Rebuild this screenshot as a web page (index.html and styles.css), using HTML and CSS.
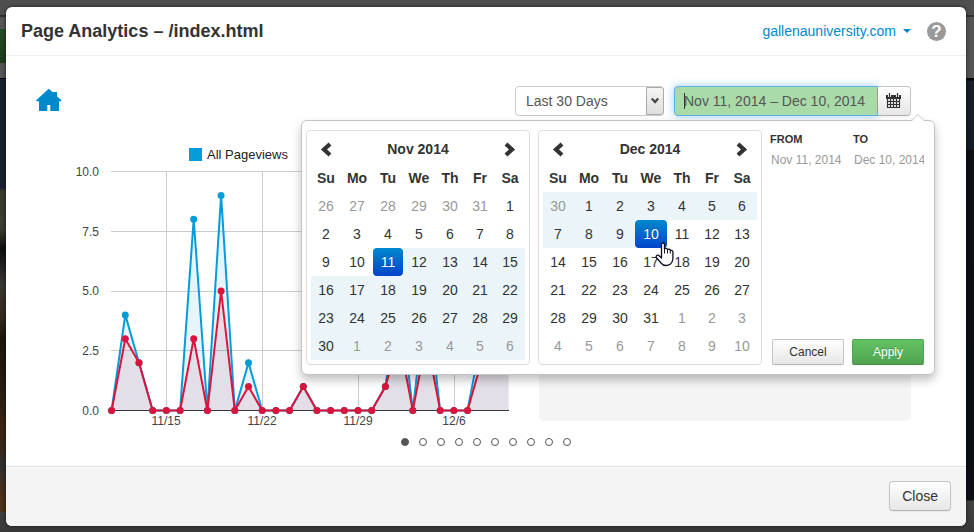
FILE: index.html
```html
<!DOCTYPE html>
<html lang="en">
<head>
<meta charset="utf-8">
<title>Page Analytics</title>
<link rel="stylesheet" href="styles.css">
</head>
<body>
<div class="modal" role="dialog" aria-labelledby="modal-title">
  <header class="modal-header">
    <h1 id="modal-title">Page Analytics – /index.html</h1>
    <div class="header-tools">
      <a class="site-link" href="#">gallenauniversity.com<span class="caret"></span></a>
      <button class="help" type="button" aria-label="Help">?</button>
    </div>
  </header>

  <main class="modal-body">
    <div class="toolbar">
      <a class="home" href="#" aria-label="Home">
        <svg width="26" height="24" viewBox="0 0 26 24"><path d="M12.700 .7 16.700 4.300V4H21V8.200L25.400 12.300V13.200H23V23H14.300V17H11.300V23H3V13.200H.2V12.300Z" fill="#0088cc"/></svg>
      </a>
      <div class="controls">
        <div class="select-wrap">
          <select class="range" aria-label="Date range"><option>Last 30 Days</option><option>Last 7 Days</option></select>
          <span class="select-arrow"><svg width="8" height="8" viewBox="0 0 8 8"><path d="M.8 1.500 4 5 7.200 1.500" fill="none" stroke="#444" stroke-width="2.200"/></svg></span>
        </div>
        <div class="date-group">
          <input class="dates" type="text" aria-label="Dates" value="Nov 11, 2014 – Dec 10, 2014">
          <span class="text-caret"></span>
          <button class="btn cal-btn" type="button" aria-label="Open calendar">
            <svg width="15" height="16" viewBox="0 0 15 16"><path d="M0 2h15v4H0Z" fill="#333"/><path d="M3.500 0v4M11.500 0v4" stroke="#f5f5f5" stroke-width="3"/><path d="M3.500 0v4M11.500 0v4M1.500 6v9M4.500 6v9M7.500 6v9M10.500 6v9M13.500 6v9M1 8.500h13M1 11.500h13M1 14.500h13" stroke="#333" stroke-width="1.200"/></svg>
          </button>

          <div class="popover">
            <div class="calendar" data-title="Nov 2014" data-lead="26-31" data-days="30" data-tail="6" data-from="16" data-to="41" data-selected="16"></div>
            <div class="calendar" data-title="Dec 2014" data-lead="30-30" data-days="31" data-tail="10" data-from="0" data-to="10" data-selected="10" data-pointer="yes"></div>
            <div class="range-side">
              <div class="range-fields">
                <div class="field"><label for="from">FROM</label><input id="from" type="text" value="Nov 11, 2014"></div>
                <div class="field"><label for="to">TO</label><input id="to" type="text" value="Dec 10, 2014"></div>
              </div>
              <div class="range-buttons">
                <button class="btn small" type="button">Cancel</button>
                <button class="btn small success" type="button">Apply</button>
              </div>
            </div>
          </div>
        </div>
      </div>
    </div>

    <div class="report">
      <svg class="chart" viewBox="36 124 503 306" role="img" aria-label="Pageviews by day">
        <rect x="189" y="148" width="13" height="13" fill="#049cdb"/>
        <text class="legend" x="207" y="159">All Pageviews</text>
        <path class="grid" d="M111 171.500H509M111 231.500H509M111 291.500H509M111 350.500H509M166.500 171V410M262.500 171V410M358.500 171V410M454.500 171V410"/>
        <path d="M111 410.500H509" stroke="#333"/>
        <g id="series"></g>
        <g class="axis-y"><text x="99" y="176">10.0</text><text x="99" y="236">7.5</text><text x="99" y="295">5.0</text><text x="99" y="355">2.5</text><text x="99" y="415">0.0</text></g>
        <g class="axis-x"><text x="166" y="425">11/15</text><text x="262" y="425">11/22</text><text x="358" y="425">11/29</text><text x="454" y="425">12/6</text></g>
      </svg>
      <section class="panel" aria-label="Summary"></section>
    </div>

    <nav class="pager" aria-label="Slides">
      <button class="dot active" type="button" aria-label="1"></button>
      <button class="dot" type="button" aria-label="2"></button>
      <button class="dot" type="button" aria-label="3"></button>
      <button class="dot" type="button" aria-label="4"></button>
      <button class="dot" type="button" aria-label="5"></button>
      <button class="dot" type="button" aria-label="6"></button>
      <button class="dot" type="button" aria-label="7"></button>
      <button class="dot" type="button" aria-label="8"></button>
      <button class="dot" type="button" aria-label="9"></button>
      <button class="dot" type="button" aria-label="10"></button>
    </nav>
  </main>

  <footer class="modal-footer"><button class="btn" type="button">Close</button></footer>
</div>
<script src="script.js"></script>
</body>
</html>
```
FILE: styles.css
```css
* { box-sizing: border-box; }

body {
  margin: 0;
  min-height: 100vh;
  padding: 7px 8px 6px 6px;
  display: flex;
  font: 14px/20px "Liberation Sans", Arial, sans-serif;
  color: #333;
  background:
    linear-gradient(#234d23, #1b3d1b) 0 29px / 6px 34px no-repeat,
    linear-gradient(#1a2130 0 109px, #3a3a2e 112px, #3d3c31 150px, #0c0e10 170px, #393733 205px, #322a1c 240px, #1e160a 260px, #2c2012 320px, #3d2412 350px, #38281a 370px, #303030 385px, #4b3019 415px, #4d3117) 0 79px / 6px 433px no-repeat,
    linear-gradient(#4f4f4f 0 15px, #303030 15px 17px, #555 17px 78px, #050505 78px 80px, #17202a 81px, #141c26 149px, #0d1014 151px, #0b1017 500px, #434343 501px, #393939 532px);
}

button, input, select { font: inherit; color: inherit; margin: 0; }
a { color: #08c; text-decoration: none; }

.modal {
  flex: 1;
  display: flex;
  flex-direction: column;
  background: #fff;
  border-radius: 6px;
  box-shadow: 0 0 4px rgba(0, 0, 0, .6);
}

.modal-header {
  display: flex;
  justify-content: space-between;
  align-items: center;
  height: 49px;
  padding: 0 20px 0 15px;
  border-bottom: 1px solid #eee;
}
.modal-header h1 { margin: 0; font-size: 18px; }
.header-tools { display: flex; align-items: center; gap: 16px; }
.site-link { display: flex; align-items: center; gap: 7px; }
.caret { border: 4px solid transparent; border-top-color: #08c; border-bottom: 0; }
.help {
  width: 19px;
  height: 19px;
  padding: 0;
  border: 0;
  border-radius: 50%;
  background: #999;
  color: #fff;
  font-size: 17px;
  font-weight: bold;
  line-height: 19px;
}

.modal-body { flex: 1; padding: 30px 55px 20px 30px; }
.toolbar { display: flex; justify-content: space-between; }
.home svg { display: block; margin-top: 2px; }
.controls { display: flex; gap: 10px; }

.select-wrap { position: relative; width: 149px; }
.range {
  appearance: none;
  width: 100%;
  height: 30px;
  padding: 0 10px;
  border: 1px solid #ccc;
  border-radius: 4px;
  background: #fff;
  color: #555;
}
.select-arrow {
  position: absolute;
  top: 1px;
  right: 0;
  bottom: 1px;
  width: 18px;
  display: flex;
  align-items: center;
  justify-content: center;
  border: 1px solid #aaa;
  border-radius: 0 3px 3px 0;
  background: linear-gradient(#f4f4f4, #dedede);
  pointer-events: none;
}

.date-group { position: relative; display: flex; }
.dates {
  width: 204px;
  height: 30px;
  padding: 0 9px;
  border: 1px solid #5eb0e5;
  border-radius: 4px 0 0 4px;
  outline: 0;
  background: #a9dba9;
  color: #555;
  box-shadow: 0 0 8px rgba(82, 168, 236, .6);
}
.text-caret { position: absolute; left: 10px; top: 7px; width: 1px; height: 16px; background: #333; }

.btn {
  height: 30px;
  padding: 0 12px;
  border: 1px solid #c5c5c5;
  border-bottom-color: #b3b3b3;
  border-radius: 4px;
  background: linear-gradient(#fff, #e6e6e6);
  box-shadow: 0 1px 2px rgba(0, 0, 0, .05);
}
.cal-btn {
  position: relative;
  width: 33px;
  padding: 0 1px 0 0;
  border-left: 0;
  border-radius: 0 4px 4px 0;
  display: flex;
  align-items: center;
  justify-content: center;
}
.small { height: 26px; width: 72px; padding: 0; font-size: 12px; line-height: 18px; border-radius: 2px; }
.success {
  border-color: #51a351 #51a351 #458a45;
  background: linear-gradient(#62c462, #51a351);
  color: #fff;
  text-shadow: 0 -1px 0 rgba(0, 0, 0, .25);
}

.popover {
  position: absolute;
  z-index: 10;
  top: 34px;
  right: -24px;
  display: flex;
  gap: 8px;
  padding: 9px 10px 9px 4px;
  border: 1px solid #c4c4c4;
  border-radius: 6px;
  background: #fff;
  box-shadow: 0 5px 10px rgba(0, 0, 0, .25);
}
.popover::before, .popover::after {
  content: "";
  position: absolute;
  right: 9px;
  bottom: 100%;
  border: 7px solid transparent;
  border-top: 0;
  border-bottom-color: #c4c4c4;
}
.popover::after { right: 10px; border-width: 0 6px 6px; border-bottom-color: #fff; }

.calendar { padding: 4px; border: 1px solid #ddd; border-radius: 4px; }
.calendar table { width: 214px; table-layout: fixed; border-collapse: collapse; }
.calendar th, .calendar td { height: 28px; padding: 0; text-align: center; }
.calendar .nav-row th { height: 29px; padding-bottom: 1px; }
.narrow { width: 30px; }
.wide { width: 32px; }
.calendar button { display: block; width: 100%; height: 28px; padding: 0; border: 0; background: none; }
.calendar .nav svg { display: block; margin: auto; }
.calendar .off { color: #999; }
.calendar .in-range { background: #ebf4f8; }
.calendar td { position: relative; }
.calendar .selected { background: #fff; }
.calendar .selected button { border-radius: 4px; background: linear-gradient(#08c, #04c); color: #fff; text-shadow: 0 -1px 0 rgba(0, 0, 0, .25); }
.pointer { position: absolute; z-index: 1; left: 20px; top: 22px; pointer-events: none; }

.range-side { display: flex; flex-direction: column; justify-content: space-between; width: 154px; }
.range-fields { display: flex; gap: 12px; }
.field { width: 71px; }
.field label { display: block; font-size: 11px; font-weight: bold; line-height: 18px; }
.field input { display: block; width: 100%; height: 24px; padding: 0 0 0 1px; border: 0; background: none; color: #999; font-size: 12px; }
.range-buttons { display: flex; justify-content: flex-end; gap: 8px; }

.report { display: grid; grid-template-columns: 503fr 372fr; margin-top: 8px; }
.chart { display: block; width: 100%; }
.chart text { font-size: 12px; fill: #444; }
.chart .legend { font-size: 13px; fill: #222; }
.axis-y { text-anchor: end; }
.axis-x { text-anchor: middle; }
.grid { stroke: #ccc; fill: none; }
.panel { margin: 12px 0 9px; border-radius: 5px; background: #f4f4f4; }

.pager { display: flex; justify-content: center; gap: 10px; margin: 8px -25px 0 0; }
.dot { width: 8px; height: 8px; padding: 0; border: 1px solid #555; border-radius: 50%; background: #fff; }
.dot.active { background: #555; }

.modal-footer {
  display: flex;
  justify-content: flex-end;
  padding: 14px 15px 15px;
  border-top: 1px solid #ddd;
  border-radius: 0 0 6px 6px;
  background: #f4f4f4;
  box-shadow: inset 0 1px 0 #fff;
}
```
FILE: script.js
```js
// Calendars: leading days of the previous month, the month, then the next month's first days.
const arrow = (d) => `<svg width="12" height="15" viewBox="0 0 12 15"><path d="${d}" fill="none" stroke="#333" stroke-width="4.200"/></svg>`;
const LEFT = "M10 2 4 7.500 10 13";
const RIGHT = "M2 2 8 7.500 2 13";
const pointer = `<svg class="pointer" width="19" height="25" viewBox="0 0 19 25"><path d="M6.500 14V2.500Q6.500 1 8 1T9.500 2.500V7Q10 6 11.200 6.300T12.500 7.500Q13 6.800 14.200 7.200T15.300 8.500Q16 7.800 17 8.500T17.900 10V17Q17.500 20 15.500 22Q13.500 23.500 10.800 23.500Q8 23.500 6 21L1.300 15.500Q.8 14 2 13.300T4.500 14L6.500 16Z" fill="#fff" stroke="#112" stroke-width="1.300" stroke-linejoin="round"/><path d="M9.500 7v4.500M12.500 7.500v4M15.300 8.500v3" stroke="#112" stroke-width="1"/></svg>`;

document.querySelectorAll(".calendar").forEach((box) => {
  const o = box.dataset;
  const days = [];
  const [first, last] = o.lead.split("-").map(Number);
  for (let d = first; d <= last; d++) days.push([d, "off"]);
  for (let d = 1; d <= +o.days; d++) days.push([d, ""]);
  for (let d = 1; d <= +o.tail; d++) days.push([d, "off"]);
  let rows = "";
  days.forEach(([d, cls], i) => {
    const on = i === +o.selected;
    if (i >= +o.from && i <= +o.to) cls += " in-range";
    if (on) cls += " selected";
    if (i % 7 === 0) rows += "<tr>";
    rows += `<td class="${cls}"><button type="button">${d}</button>${on && o.pointer ? pointer : ""}</td>`;
    if (i % 7 === 6) rows += "</tr>";
  });
  const names = ["Su", "Mo", "Tu", "We", "Th", "Fr", "Sa"];
  box.innerHTML = `<table><colgroup>${names.map((n, i) => `<col class="${i === 1 || i === 3 ? "wide" : "narrow"}">`).join("")}</colgroup>
    <thead><tr class="nav-row"><th class="nav"><button type="button" aria-label="Previous month">${arrow(LEFT)}</button></th><th colspan="5">${o.title}</th><th class="nav"><button type="button" aria-label="Next month">${arrow(RIGHT)}</button></th></tr>
    <tr>${names.map((n) => `<th>${n}</th>`).join("")}</tr></thead><tbody>${rows}</tbody></table>`;
});

// Chart series, one value per day.
const all = [0, 4, 2, 0, 0, 0, 8, 0, 9, 0, 2, 0, 0, 0, 1, 0, 0, 0, 0, 0, 1, 5, 0, 5, 0, 0, 0, 3, 4, 4];
const unique = [0, 3, 2, 0, 0, 0, 3, 0, 5, 0, 1, 0, 0, 0, 1, 0, 0, 0, 0, 0, 1, 3, 0, 3, 0, 0, 0, 2, 3, 3];
const draw = (values, color) => {
  const pts = values.map((v, i) => [111.6 + i * 13.69, 410.5 - v * 23.9]);
  const line = pts.map((p) => p.map((n) => n.toFixed(1)).join(",")).join(" ");
  return `<polygon points="111.6,410.5 ${line} 508.6,410.5" fill="${color}" fill-opacity=".1"/>
    <polyline points="${line}" fill="none" stroke="${color}" stroke-width="2"/>` +
    pts.map(([x, y]) => `<circle cx="${x.toFixed(1)}" cy="${y.toFixed(1)}" r="3.5" fill="${color}"/>`).join("");
};
document.getElementById("series").innerHTML = draw(all, "#049cdb") + draw(unique, "#dc143c");
```
